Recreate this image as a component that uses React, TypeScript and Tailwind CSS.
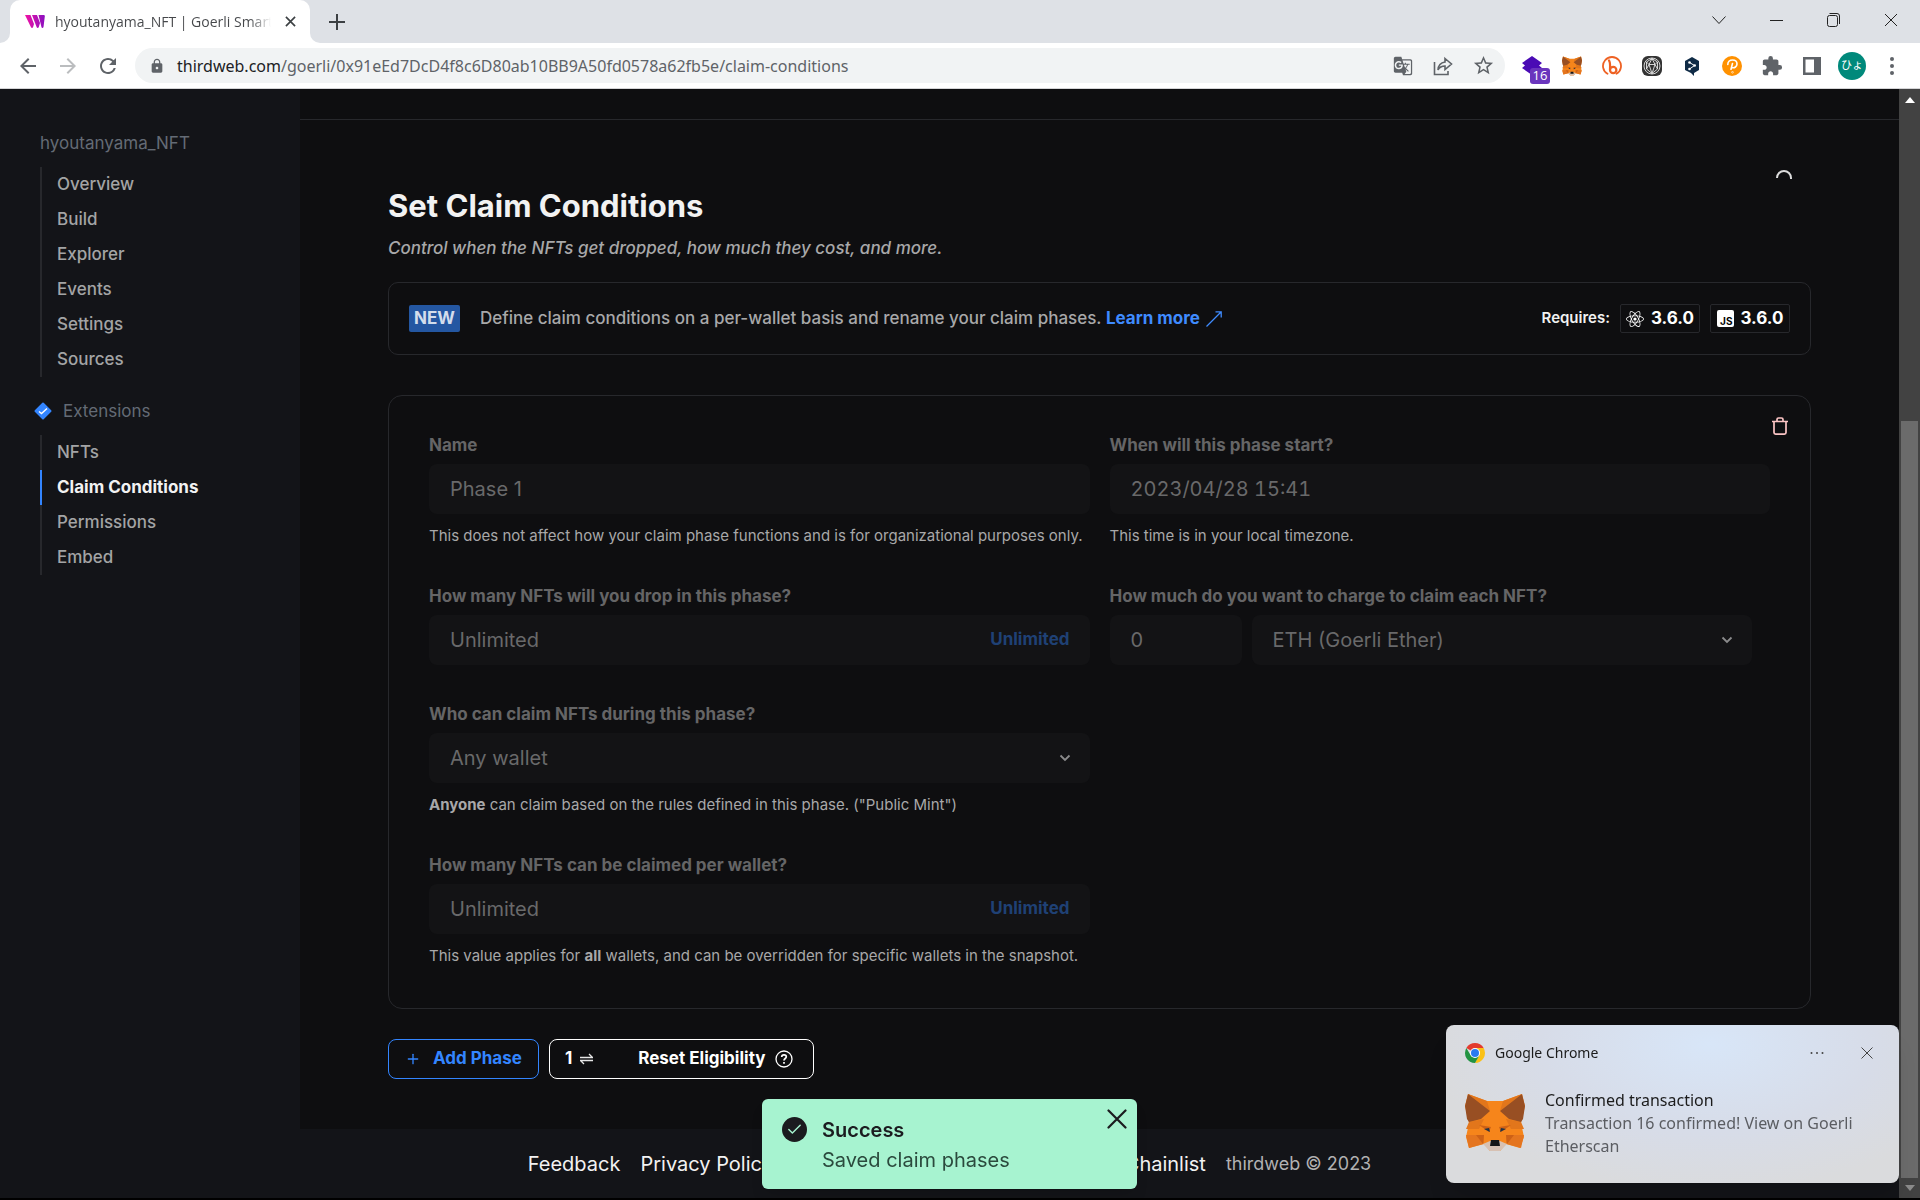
import { useState } from 'react';
import type { ReactNode } from 'react';
import { FiCheck, FiPlus } from 'react-icons/fi';
import { MdExtension, MdGTranslate, MdLock, MdStarOutline, MdArrowBack, MdArrowForward, MdRefresh } from 'react-icons/md';
import { FaReact } from 'react-icons/fa';

const contractLinks = ['Overview', 'Build', 'Explorer', 'Events', 'Settings', 'Sources'];
const extensionLinks = ['NFTs', 'Claim Conditions', 'Permissions', 'Embed'];
const footerLinks = ['Feedback', 'Privacy Policy', 'Terms of Service', 'Gas Estimator', 'Chainlist'];

const FoxIcon = ({ className }: { className: string }) => (
  <svg viewBox="0 0 60 57" className={className} aria-hidden="true">
    <path fill="#f6851b" d="M3 0 22 7h16L57 0l3 12-4 17 3 14-4 11-14-4-6 7H25l-6-7-15 4-3-11 3-14L0 12z" />
    <path fill="#e2761b" d="M3 0 22 7l3 10zM57 0 38 7l-3 10zM4 28l15-3-5 10H1zM56 28l-15-3 5 10h13zM19 41h-8l8 9zM41 41h8l-8 9z" />
    <path fill="#984f23" d="M3 0 0 12l2 13 2 3 12-3 9-8zM57 0l3 12-2 13-2 3-12-3-9-8z" />
    <path fill="#e4751f" d="M1 41h18l-1 9-14 4zM59 41H41l1 9 14 4z" />
    <path fill="#cd6116" d="M14 31l12 2-2 5zM46 31l-12 2 2 5zM11 41h8l-1 9zM49 41h-8l1 9z" />
    <path fill="#233447" d="m19 35 5-1 1 4zM41 35l-5-1-1 4z" />
    <path fill="#d7c1b3" d="m18 50 7-3h10l7 3-7 7H25z" />
    <path fill="#161616" d="M26 46h8l1 6H25z" />
  </svg>
);

const WebLogo = () => (
  <svg viewBox="0 0 20 13" className="h-[13px] w-5" aria-hidden="true">
    <defs>
      <linearGradient id="tw-logo" x1="0" x2="1">
        <stop offset="0" stopColor="#f213a4" />
        <stop offset="1" stopColor="#8a0fc0" />
      </linearGradient>
    </defs>
    <path fill="url(#tw-logo)" d="M0 0h5.500l3.500 9-1 3.200c-.5 1-1.500 1-2 0zM7 0h5l3 8-1.300 4.200c-.5 1-1.500 1-2 0zM13.500 0h5c1 0 1.500.800 1.300 1.500L18.500 12c-.4 1.200-1.600 1.200-2 .2z" />
  </svg>
);

const ChromeLogo = () => (
  <svg viewBox="0 0 20 20" className="size-5" aria-hidden="true">
    <path fill="#e33b2e" d="M10 10 1.340 5A10 10 0 0 1 18.660 5z" />
    <path fill="#fbc116" d="M18.660 5A10 10 0 0 1 10 20l4-7.700L14.500 8 10 5z" />
    <path fill="#229342" d="M1.340 5A10 10 0 0 0 10 20l4.300-7.500-4.300 1L5.500 12z" />
    <circle cx="10" cy="10" r="5" fill="#fff" />
    <circle cx="10" cy="10" r="4" fill="#2a7bf0" />
  </svg>
);

const Chevron = () => (
  <svg viewBox="0 0 12 12" className="pointer-events-none absolute right-[19px] top-[19px] size-3" fill="none" stroke="#8b8b8c" strokeWidth="1.800" aria-hidden="true">
    <path d="m1.500 3.500 4.500 4.500 4.500-4.500" />
  </svg>
);

const ToolButton = ({ label, children }: { label: string; children: ReactNode }) => (
  <button aria-label={label} className="flex h-9 w-10 shrink-0 items-center justify-center text-[#5f6368]">
    {children}
  </button>
);

const BrowserBar = () => (
  <header className="font-['Open_Sans','Noto_Sans_CJK_JP',sans-serif]">
    <div className="flex h-[43px] items-stretch bg-[#dee1e6]">
      <div className="flex w-2.5 items-end bg-white">
        <div className="h-full w-full rounded-br-[10px] bg-[#dee1e6]" />
      </div>
      <div className="flex w-[300px] items-center rounded-t-[10px] bg-white pl-[15px] pr-2">
        <WebLogo />
        <span className="ml-2.5 w-[216px] shrink-0 overflow-hidden whitespace-nowrap bg-linear-to-r from-[#45474a] from-90% to-white bg-clip-text text-sm text-transparent">
          hyoutanyama_NFT | Goerli Smart Contract
        </span>
        <button aria-label="Close tab" className="ml-auto flex size-6 shrink-0 items-center justify-center">
          <svg viewBox="0 0 12 12" className="size-[11px]" stroke="#3c4043" strokeWidth="1.800"><path d="m1 1 10 10M11 1 1 11" /></svg>
        </button>
      </div>
      <div className="w-2.5 bg-white">
        <div className="h-full w-full rounded-bl-[10px] bg-[#dee1e6]" />
      </div>
      <button aria-label="New tab" className="flex w-[34px] items-center justify-center">
        <svg viewBox="0 0 16 16" className="size-4" stroke="#3c4043" strokeWidth="2"><path d="M8 0v16M0 8h16" /></svg>
      </button>
      <div className="ml-auto flex text-[#222]">
        <button aria-label="Search tabs" className="flex w-[58px] items-center justify-center pb-1">
          <svg viewBox="0 0 14 14" className="size-3.5" fill="none" stroke="currentColor"><path d="m.5 3.500 6.500 7 6.500-7" /></svg>
        </button>
        <button aria-label="Minimize" className="flex w-[57px] items-center justify-center pb-1">
          <svg viewBox="0 0 14 14" className="size-3.5" stroke="currentColor"><path d="M0 7.500h13" /></svg>
        </button>
        <button aria-label="Restore" className="flex w-[57px] items-center justify-center pb-1">
          <svg viewBox="0 0 14 14" className="size-3.5" fill="none" stroke="currentColor">
            <rect x=".5" y="2.500" width="10" height="11" rx="2" />
            <path d="M2.500 .5h7.500A2.500 2.500 0 0 1 12.500 3v8" />
          </svg>
        </button>
        <button aria-label="Close window" className="flex w-[58px] items-center justify-center pb-1">
          <svg viewBox="0 0 14 14" className="size-3.5" stroke="currentColor"><path d="m1 1 12 12M13 1 1 13" /></svg>
        </button>
      </div>
    </div>

    <div className="flex h-[46px] items-center border-b border-[#d5d5d7] bg-white px-2">
      <ToolButton label="Back"><MdArrowBack className="size-6" /></ToolButton>
      <ToolButton label="Forward"><MdArrowForward className="size-6 text-[#bbbdbf]" /></ToolButton>
      <ToolButton label="Reload"><MdRefresh className="size-6" /></ToolButton>
      <div className="mx-[7px] flex h-[35px] flex-1 items-center rounded-full bg-[#f1f3f4] pr-0.5 pl-3.5">
        <MdLock className="size-4 text-[#5f6368]" />
        <p className="ml-3 flex-1 whitespace-nowrap font-['Noto_Sans',sans-serif] text-base text-[#5f6368]">
          <span className="text-[#202124]">thirdweb.com</span>/goerli/0x91eEd7DcD4f8c6D80ab10BB9A50fd0578a62fb5e/claim-conditions
        </p>
        <ToolButton label="Translate"><MdGTranslate className="size-5" /></ToolButton>
        <ToolButton label="Share">
          <svg viewBox="0 0 20 20" className="size-5" fill="none" stroke="currentColor" strokeWidth="1.600">
            <path d="M1.500 6v12.500H15V15M12 2.500l6.500 5.500-6.500 5.500V10c-3.500 0-5.500 1-7 4 .3-5 3-7.500 7-8z" />
          </svg>
        </ToolButton>
        <ToolButton label="Bookmark"><MdStarOutline className="size-[23px]" /></ToolButton>
      </div>
      <ToolButton label="Layers extension">
        <span className="relative">
          <svg viewBox="0 0 20 20" className="size-5" fill="#4a0bb5"><path d="m10 0 10 7-3 2.500 3 2.500-10 7-10-7 3-2.500L0 7z" /></svg>
          <span className="absolute top-3 left-2 flex h-4 w-5 items-center justify-center rounded-[3px] bg-[#6a35bd] text-[13px] leading-none text-white">16</span>
        </span>
      </ToolButton>
      <ToolButton label="MetaMask"><FoxIcon className="h-5 w-5" /></ToolButton>
      <ToolButton label="Bitly">
        <svg viewBox="0 0 20 20" className="size-5" fill="none" stroke="#ee6123" strokeLinecap="round">
          <path strokeWidth="1.800" d="M5.500 17.800A9 9 0 1 1 14.500 17.800" />
          <path strokeWidth="2.200" d="M7 4.500C8.500 6.500 8 9 8 14" />
          <circle cx="11.200" cy="14" r="3.200" strokeWidth="2.200" />
        </svg>
      </ToolButton>
      <ToolButton label="Gem extension">
        <svg viewBox="0 0 20 20" className="size-5" fill="none" stroke="#e6e6e6" strokeWidth=".9">
          <rect width="20" height="20" rx="6" fill="#333" stroke="none" />
          <circle cx="10" cy="10" r="8" />
          <path d="M10 2.500 4.500 6v7l5.500 4.500 5.500-4.500V6zM4.500 6 7 8.500h6L15.500 6M7 8.500l3 9 3-9M10 2.500 7 8.500M10 2.500l3 6M4.500 13 7 8.500M15.500 13 13 8.500" />
        </svg>
      </ToolButton>
      <ToolButton label="DeepL">
        <svg viewBox="0 0 16 20" className="h-5 w-4">
          <path fill="#0f2b46" d="m8 1 7 4v9l-5 3v3l-3-3-6-3V5z" />
          <path stroke="#fff" d="m5.500 6.500 5 3-5 3.500" fill="none" />
          <g fill="#fff"><circle cx="5.500" cy="6.500" r="1.300" /><circle cx="10.700" cy="9.500" r="1.300" /><circle cx="5.500" cy="13" r="1.300" /></g>
        </svg>
      </ToolButton>
      <ToolButton label="P extension">
        <svg viewBox="0 0 20 20" className="size-5" fill="none" stroke="#fff" strokeWidth="1.600" strokeLinecap="round">
          <circle cx="10" cy="10" r="10" fill="#ff9100" stroke="none" />
          <path d="M5.800 8.500C5.800 5.500 8 4 10.500 4 13 4 15 5.500 15 8s-2.500 4.300-5 3.500M10.500 7.500 9 13.200" />
          <circle cx="10.500" cy="16.300" r=".3" />
        </svg>
      </ToolButton>
      <ToolButton label="Extensions"><MdExtension className="size-[22px]" /></ToolButton>
      <ToolButton label="Side panel">
        <svg viewBox="0 0 18 18" className="size-[18px]" fill="currentColor"><path fillRule="evenodd" d="M0 0h18v18H0zm2.500 2.500v13H11v-13z" /></svg>
      </ToolButton>
      <ToolButton label="Profile">
        <span className="flex size-7 items-center justify-center rounded-full bg-[#00897b] text-[11px] text-white">ひょ</span>
      </ToolButton>
      <ToolButton label="Menu">
        <svg viewBox="0 0 4 18" className="h-[18px] w-1" fill="currentColor"><circle cx="2" cy="2" r="2" /><circle cx="2" cy="9" r="2" /><circle cx="2" cy="16" r="2" /></svg>
      </ToolButton>
    </div>
  </header>
);

const NavList = ({ links, active }: { links: string[]; active?: string }) => (
  <ul className="mt-3">
    {links.map((link) => (
      <li key={link}>
        <a
          href="#"
          className={`flex h-[35px] items-center border-l-2 pl-[15px] text-[17px] ${
            link === active ? 'border-[#3385ff] font-bold text-[#f2f2f2]' : 'border-[#27282c] font-medium text-[#a3a4a5]'
          }`}
        >
          {link}
        </a>
      </li>
    ))}
  </ul>
);

const Sidebar = () => (
  <aside className="w-[300px] shrink-0 bg-[#131418] pt-[42px] pl-10">
    <p className="text-[17px] leading-6 text-[#646b75]">hyoutanyama_NFT</p>
    <NavList links={contractLinks} />
    <div className="mt-[22px] -ml-1.5 flex items-center gap-[11px]">
      <svg viewBox="0 0 18 18" className="size-[18px]" aria-hidden="true">
        <rect x="2.700" y="2.700" width="12.600" height="12.600" rx="1" transform="rotate(45 9 9)" fill="#3385ff" />
        <path d="m5 9.500 2.500 2L13 6.500" fill="none" stroke="#fff" strokeWidth="1.400" />
      </svg>
      <p className="text-[17px] leading-6 text-[#646b75]">Extensions</p>
    </div>
    <NavList links={extensionLinks} active="Claim Conditions" />
  </aside>
);

interface FieldProps {
  id: string;
  label: string;
  help?: ReactNode;
  children: ReactNode;
}

const Field = ({ id, label, help, children }: FieldProps) => (
  <div>
    <label htmlFor={id} className="block text-[17px] leading-[22px] font-bold text-[#656566]">{label}</label>
    <div className="mt-2">{children}</div>
    {help && <p className="mt-[11px] text-[15px] leading-[22px] whitespace-nowrap text-[#a8a8a9]">{help}</p>}
  </div>
);

const inputClass = 'h-[50px] w-full rounded-lg bg-[#131315] px-[21px] text-xl text-[#69696a]';

const QuantityInput = ({ id }: { id: string }) => {
  const [value, setValue] = useState('Unlimited');
  return (
    <div className="flex h-[50px] items-center rounded-lg bg-[#131315] pr-5 pl-[21px]">
      <input id={id} value={value} onChange={(e) => setValue(e.target.value)} className="min-w-0 flex-1 bg-transparent text-xl text-[#69696a]" />
      <button onClick={() => setValue('Unlimited')} className="text-[17px] font-bold text-[#1f4175]">Unlimited</button>
    </div>
  );
};

const VersionBadge = ({ icon }: { icon: ReactNode }) => (
  <span className="flex h-[29px] w-20 items-center justify-center gap-[7px] rounded-xs border border-[#27282c] text-[17px] font-bold text-white">
    {icon}
    3.6.0
  </span>
);

const ClaimPhase = () => {
  const [name, setName] = useState('Phase 1');
  const [start, setStart] = useState('2023/04/28 15:41');
  const [price, setPrice] = useState('0');

  return (
    <section className="relative mt-10 rounded-[14px] border border-[#27282c] px-10 pt-[38px] pb-[41px]">
      <button aria-label="Delete phase" className="absolute top-3.5 right-3.5 flex size-8 items-center justify-center">
        <svg viewBox="0 0 16 18" className="h-[18px] w-4" fill="none" stroke="#fcc5c5" strokeWidth="1.700">
          <path d="M0 4.500h16M5 4V2.500C5 1.500 5.500 1 6.500 1h3c1 0 1.500.500 1.500 1.500V4M2 4.500V15.500c0 1 .600 1.600 1.600 1.600h8.800c1 0 1.600-.600 1.600-1.600V4.500" />
        </svg>
      </button>
      <div className="grid grid-cols-2 gap-x-5 gap-y-[38px]">
        <Field id="name" label="Name" help="This does not affect how your claim phase functions and is for organizational purposes only.">
          <input id="name" className={inputClass} value={name} onChange={(e) => setName(e.target.value)} />
        </Field>
        <Field id="start" label="When will this phase start?" help="This time is in your local timezone.">
          <input id="start" className={`tabular-nums ${inputClass}`} value={start} onChange={(e) => setStart(e.target.value)} />
        </Field>
        <Field id="supply" label="How many NFTs will you drop in this phase?">
          <QuantityInput id="supply" />
        </Field>
        <Field id="price" label="How much do you want to charge to claim each NFT?">
          <div className="flex gap-2.5 pr-[18px]">
            <div className="w-[132px] shrink-0">
              <input id="price" className={inputClass} value={price} onChange={(e) => setPrice(e.target.value)} />
            </div>
            <div className="relative flex-1">
              <select aria-label="Currency" className={`appearance-none ${inputClass}`}>
                <option>ETH (Goerli Ether)</option>
              </select>
              <Chevron />
            </div>
          </div>
        </Field>
        <Field id="who" label="Who can claim NFTs during this phase?" help={<><b>Anyone</b> can claim based on the rules defined in this phase. ("Public Mint")</>}>
          <div className="relative">
            <select id="who" className={`appearance-none ${inputClass}`}>
              <option>Any wallet</option>
            </select>
            <Chevron />
          </div>
        </Field>
        <div />
        <Field id="limit" label="How many NFTs can be claimed per wallet?" help={<>This value applies for <b>all</b> wallets, and can be overridden for specific wallets in the snapshot.</>}>
          <QuantityInput id="limit" />
        </Field>
      </div>
    </section>
  );
};

const ClaimConditions = () => (
  <main className="min-w-0 flex-1 bg-[#0e0e10]">
    <div className="h-[31px] border-b border-[#27282c]" />
    <div className="px-[88px] pt-[50px] pb-[49px]">
      <svg viewBox="0 0 16 16" className="mr-[19px] ml-auto size-4" fill="none" stroke="#dcdcdc" strokeWidth="2" aria-hidden="true">
        <path d="M1 8a7 7 0 0 1 14 0v1" />
      </svg>
      <h1 className="text-[31px] leading-10 font-bold text-[#f2f2f2]">Set Claim Conditions</h1>
      <p className="mt-[9px] text-[17px] leading-[26px] font-medium text-[#a8a8a9] italic">Control when the NFTs get dropped, how much they cost, and more.</p>

      <div className="mt-[21px] flex h-[73px] items-center rounded-[10px] border border-[#27282c] px-5">
        <span className="rounded-xs bg-[#2457a2] px-[5px] text-[17px] leading-[27px] font-bold text-[#d3ddec]">NEW</span>
        <p className="ml-5 text-[17px] font-medium text-[#a8a8a9]">
          Define claim conditions on a per-wallet basis and rename your claim phases.{' '}
          <a href="#" className="font-bold text-[#3f8bff]">
            Learn more
            <svg viewBox="0 0 16 16" className="ml-1.5 inline size-4" fill="none" stroke="currentColor" strokeWidth="1.300" aria-hidden="true">
              <path d="M.5 15.500 15 1M9.500.800h5.700v5.700" />
            </svg>
          </a>
        </p>
        <div className="ml-auto flex items-center gap-2.5">
          <span className="text-[15px] font-semibold text-[#f2f2f2]">Requires:</span>
          <VersionBadge icon={<FaReact className="size-[18px]" />} />
          <VersionBadge
            icon={
              <span className="flex h-[17px] w-[17px] items-end justify-end rounded-xs bg-white pr-px text-[10px] leading-[11px] font-bold text-black">JS</span>
            }
          />
        </div>
      </div>

      <ClaimPhase />

      <div className="mt-[30px] flex gap-2.5">
        <button className="flex h-10 items-center gap-3 rounded-lg border border-[#3385ff] px-4 text-[17px] font-bold text-[#3385ff]">
          <FiPlus className="size-4" />
          Add Phase
        </button>
        <button className="flex h-10 items-center rounded-lg border border-white pr-5 pl-[15px] text-[17px] font-bold text-white">
          1
          <svg viewBox="0 0 13 12" className="ml-2 h-3 w-[13px]" fill="none" stroke="#e6e6e6" strokeWidth="1.300" aria-hidden="true">
            <path d="M0 4.500h12.500L9 1M13 7.500H.5L4 11" />
          </svg>
          <span className="ml-[45px]">Reset Eligibility</span>
          <svg viewBox="0 0 18 18" className="ml-2.5 size-[18px]" fill="none" stroke="currentColor" strokeWidth="1.300" aria-hidden="true">
            <circle cx="9" cy="9" r="8" />
            <path strokeWidth="1.700" d="M6.700 7c0-1.500 1-2.200 2.300-2.200s2.300.800 2.300 2C11.300 8.500 9 8.500 9 10.500M9 12v1.700" />
          </svg>
        </button>
      </div>
    </div>
  </main>
);

const SuccessToast = () => (
  <div className="pointer-events-none fixed right-[21px] bottom-[11px] left-0 flex justify-center">
    <div role="status" className="pointer-events-auto flex h-[90px] w-[375px] rounded-md bg-[#a7f3d0] pt-4 pl-5 text-xl leading-[30px] text-[#1b1b1f] shadow-lg">
      <span className="mt-0.5 flex size-[25px] items-center justify-center rounded-full bg-[#1b1b1f]">
        <FiCheck className="size-[17px] text-[#a7f3d0]" />
      </span>
      <div className="ml-[15px]">
        <p className="font-semibold">Success</p>
        <p className="text-[#2b4a3d]">Saved claim phases</p>
      </div>
      <button aria-label="Dismiss" className="mr-2.5 -mt-1.5 ml-auto h-5">
        <svg viewBox="0 0 20 20" className="size-5" stroke="#1b1b1f" strokeWidth="2.200" strokeLinecap="round"><path d="m1.500 1.500 17 17M18.500 1.500l-17 17" /></svg>
      </button>
    </div>
  </div>
);

const SystemNotification = () => (
  <div className="fixed right-[21px] bottom-[17px] h-[158px] w-[453px] rounded-lg bg-[#dadbdd] bg-radial-[at_58%_12%] from-[#d8e6f8] via-[#d7dce8] via-45% to-[#dadbdd] to-75% px-[19px] pt-[18px] font-['Noto_Sans',sans-serif] shadow-xl">
    <div className="flex h-5 items-center">
      <ChromeLogo />
      <span className="ml-2.5 text-sm text-[#1c1c1c]">Google Chrome</span>
      <button aria-label="More" className="ml-auto">
        <svg viewBox="0 0 14 4" className="h-1 w-3.5" fill="#444"><circle cx="1.500" cy="2" r="1" /><circle cx="7" cy="2" r="1" /><circle cx="12.500" cy="2" r="1" /></svg>
      </button>
      <button aria-label="Close" className="mr-[7px] ml-[37px]">
        <svg viewBox="0 0 12 12" className="size-3" stroke="#444"><path d="m.5.500 11 11M11.500.500l-11 11" /></svg>
      </button>
    </div>
    <div className="mt-[26px] flex gap-5">
      <FoxIcon className="mt-[5px] h-[57px] w-[60px] shrink-0" />
      <div className="text-base leading-[23px] text-[#5b5d62]">
        <p className="text-[#1c1c1c]">Confirmed transaction</p>
        <p>Transaction 16 confirmed! View on Goerli Etherscan</p>
      </div>
    </div>
  </div>
);

export default function App() {
  return (
    <div className="flex min-h-screen flex-col bg-black pb-0.5 font-['Inter',sans-serif]">
      <BrowserBar />
      <div className="flex flex-1">
        <div className="flex min-w-0 flex-1 flex-col">
          <div className="flex flex-1">
            <Sidebar />
            <ClaimConditions />
          </div>
          <footer className="flex h-[69px] items-center justify-center gap-5 bg-[#131418] text-xl text-[#f2f2f2]">
            {footerLinks.map((link) => (
              <a key={link} href="#">{link}</a>
            ))}
            <p className="text-lg text-[#b1b1b2]">thirdweb © 2023</p>
          </footer>
        </div>
        <div className="flex w-[21px] flex-col items-center bg-[#424242] pt-2" aria-hidden="true">
          <svg viewBox="0 0 10 6" className="h-1.5 w-2.5" fill="#fff"><path d="M0 6 5 0l5 6z" /></svg>
          <div className="mt-[318px] w-[17px] flex-1 bg-[#6b6b6b]" />
          <svg viewBox="0 0 10 6" className="my-[7px] h-1.5 w-2.5" fill="#8b8b8b"><path d="m0 0 5 6 5-6z" /></svg>
        </div>
      </div>
      <SuccessToast />
      <SystemNotification />
    </div>
  );
}
